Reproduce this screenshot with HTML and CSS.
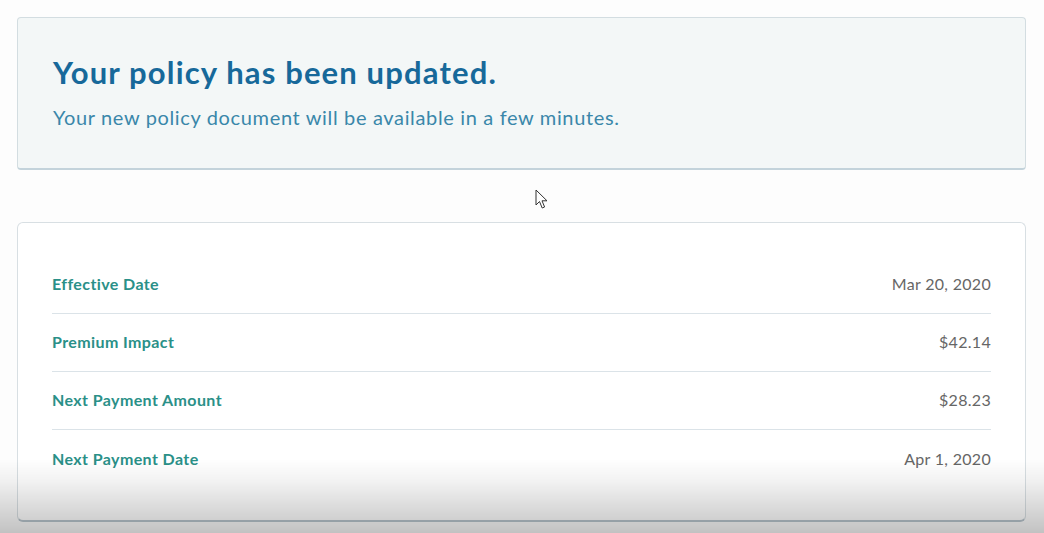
FILE: index.html
```html
<!DOCTYPE html>
<html lang="en">

<head>
  <meta charset="utf-8">
  <meta name="viewport" content="width=device-width, initial-scale=1">
  <title>Policy Updated</title>
  <link rel="stylesheet" href="styles.css">
</head>

<body>
  <div class="page">
    <div class="notice">
      <h1>Your policy has been updated.</h1>
      <p>Your new policy document will be available in a few minutes.</p>
    </div>

    <div class="details">
      <div class="row">
        <span class="label">Effective Date</span>
        <span class="value">Mar 20, 2020</span>
      </div>
      <div class="row">
        <span class="label">Premium Impact</span>
        <span class="value">$42.14</span>
      </div>
      <div class="row">
        <span class="label">Next Payment Amount</span>
        <span class="value">$28.23</span>
      </div>
      <div class="row">
        <span class="label">Next Payment Date</span>
        <span class="value">Apr 1, 2020</span>
      </div>
    </div>
  </div>

  <svg class="cursor" width="14" height="21" viewBox="0 0 14 21">
    <path d="M1 1 L1 16 L4.5 12.5 L7.2 19 L9.6 18 L7 11.8 L12 11.8 Z" fill="#fff" stroke="#333" stroke-width="1" stroke-linejoin="round" />
  </svg>
  <div class="shade"></div>
</body>

</html>
```

FILE: styles.css
```css
* {
  margin: 0;
  padding: 0;
  box-sizing: border-box;
}

body {
  font-family: 'Lato', sans-serif;
  background-color: #fdfdfd;
  overflow: hidden;
}

.page {
  padding: 17px 18px 0 17px;
}

.notice {
  background-color: #f3f7f7;
  border: 1px solid #d3dde1;
  border-bottom: 2px solid #c3d3db;
  border-radius: 4px;
  height: 153px;
  padding: 34px 35px 0 35px;
}

.notice h1 {
  font-size: 31px;
  font-weight: 700;
  color: #17699a;
  line-height: 40px;
  letter-spacing: 1.15px;
}

.notice p {
  font-size: 20px;
  color: #3a87aa;
  margin-top: 12px;
  line-height: 26px;
  letter-spacing: 0.65px;
}

.details {
  margin-top: 52px;
  background-color: #fff;
  border: 1px solid #d8dfe3;
  border-bottom: 2px solid #b9c6ce;
  border-radius: 6px;
  height: 300px;
  padding: 33px 34px 0 34px;
}

.row {
  display: flex;
  justify-content: space-between;
  align-items: center;
  height: 58px;
  padding-bottom: 2px;
  border-bottom: 1px solid #dbe3e8;
}

.row:last-child {
  border-bottom: none;
}

.label {
  font-size: 16px;
  font-weight: 700;
  color: #2a9088;
  letter-spacing: 0.4px;
}

.value {
  font-size: 16px;
  color: #666;
  letter-spacing: 0.3px;
}

.cursor {
  position: absolute;
  left: 535px;
  top: 189px;
}

.shade {
  position: fixed;
  left: 0;
  right: 0;
  bottom: 0;
  height: 74px;
  background: linear-gradient(to bottom, rgba(0, 0, 0, 0), rgba(0, 0, 0, 0.05) 30%, rgba(0, 0, 0, 0.23));
  pointer-events: none;
}
```
